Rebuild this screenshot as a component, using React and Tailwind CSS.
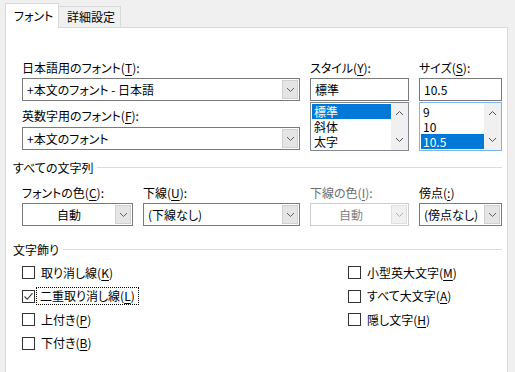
import React from 'react';

const Chevron = ({ up = false, color = '#606060' }) => (
  <svg width="9" height="6" viewBox="0 0 9 6" className="block">
    <path d={up ? 'M1 5 L4.5 1.5 L8 5' : 'M1 1 L4.5 4.5 L8 1'} fill="none" stroke={color} strokeWidth="1" />
  </svg>
);

const U = ({ children }) => <span className="underline underline-offset-2">{children}</span>;

const Combo = ({ value, center = false, disabled = false, className = '' }) => (
  <div className={`flex h-[23px] border bg-white ${disabled ? 'border-[#cccccc] text-[#838383]' : 'border-[#7a7a7a] text-black'} ${className}`}>
    <div className={`flex-1 flex items-center min-w-0 whitespace-nowrap ${center ? 'justify-center' : 'pl-[4px]'}`}>{value}</div>
    <div className={`w-[16px] my-px mr-px flex items-center justify-center border ${disabled ? 'bg-[#f0f0f0] border-[#e0e0e0]' : 'bg-[#e5e5e5] border-[#d0d0d0]'}`}>
      <Chevron color={disabled ? '#b0b0b0' : '#606060'} />
    </div>
  </div>
);

const ListBox = ({ items, selected, border = 'border-[#828790]' }) => (
  <div className={`mt-px flex h-[49px] border bg-white ${border}`}>
    <div className="flex-1 pt-px pl-px">
      {items.map((it) => (
        <div key={it} className={`h-[15px] leading-[15px] pl-[2px] ${it === selected ? 'bg-[#0078d7] text-white' : 'text-black'}`}>
          {it}
        </div>
      ))}
    </div>
    <div className="w-[17px] bg-[#f0f0f0] flex flex-col items-center justify-between py-[7px]">
      <Chevron up color="#505050" />
      <Chevron color="#505050" />
    </div>
  </div>
);

const Section = ({ title, className = '' }) => (
  <div className={`flex items-center h-[15px] ${className}`}>
    <span className="leading-[15px] whitespace-nowrap">{title}</span>
    <div className="flex-1 h-px bg-[#dcdcdc] ml-[4px]" />
  </div>
);

const Check = ({ label, checked = false, focus = false }) => (
  <div className="flex items-center h-[23.5px]">
    <div className="w-[13px] h-[13px] border border-[#333333] bg-white flex items-center justify-center">
      {checked && (
        <svg width="11" height="11" viewBox="0 0 11 11">
          <path d="M1.5 5.5 L4.2 8.3 L9.5 2.2" fill="none" stroke="#333333" strokeWidth="1.1" />
        </svg>
      )}
    </div>
    <span className={`ml-[2px] px-[3px] leading-[16px] whitespace-nowrap ${focus ? 'outline outline-1 outline-dotted outline-black' : 'border border-transparent'}`}>
      {label}
    </span>
  </div>
);

const Label = ({ children, muted = false }) => (
  <div className={`h-[15px] leading-[15px] whitespace-nowrap ${muted ? 'text-[#6d6d6d]' : 'text-black'}`}>{children}</div>
);

export default function App() {
  return (
    <div className="w-[515px] h-[372px] overflow-hidden bg-[#f0f0f0] text-[12px] text-black font-['Noto_Sans_CJK_JP','Noto_Sans',sans-serif] [font-feature-settings:'palt']">
      {/* タブ */}
      <div className="flex items-end h-[27px] pl-[5px]">
        <div className="relative z-10 -mb-px w-[54px] h-[25px] bg-white border-x border-t border-[#d9d9d9] pl-[8px] pt-[4px] leading-[15px]">
          フォント
        </div>
        <div className="w-[62px] h-[21px] border-t border-r border-[#d9d9d9] pl-[8px] pt-[2px] leading-[15px]">
          詳細設定
        </div>
      </div>

      {/* パネル */}
      <div className="ml-[5px] w-[503px] h-[360px] bg-white border border-[#d9d9d9] pl-[7px] pr-[5px]">
        <div className="pl-[9px] pt-[32px] flex items-start gap-[10px]">
          <div className="w-[278px]">
            <Label>日本語用のフォント(<U>T</U>):</Label>
            <Combo value="+本文のフォント - 日本語" className="mt-[3px]" />
            <div className="mt-[7px]">
              <Label>英数字用のフォント(<U>F</U>):</Label>
            </div>
            <Combo value="+本文のフォント" className="mt-[4px]" />
          </div>
          <div className="w-[99px]">
            <Label>スタイル(<U>Y</U>):</Label>
            <div className="mt-[3px] h-[23px] border border-[#7a7a7a] flex items-center pl-[4px]">標準</div>
            <ListBox items={['標準', '斜体', '太字']} selected="標準" />
          </div>
          <div className="w-[83px]">
            <Label>サイズ(<U>S</U>):</Label>
            <div className="mt-[3px] h-[23px] border border-[#7a7a7a] flex items-center pl-[4px]">10.5</div>
            <ListBox items={['9', '10', '10.5']} selected="10.5" border="border-[#7eb4ea]" />
          </div>
        </div>

        <Section title="すべての文字列" className="mt-[9px]" />

        <div className="pl-[9px] mt-[10px] flex items-start gap-[10px]">
          <div className="w-[111px]">
            <Label>フォントの色(<U>C</U>):</Label>
            <Combo value="自動" center className="mt-[3px]" />
          </div>
          <div className="w-[157px]">
            <Label>下線(<U>U</U>):</Label>
            <Combo value="(下線なし)" className="mt-[3px]" />
          </div>
          <div className="w-[99px]">
            <Label muted>下線の色(<U>I</U>):</Label>
            <Combo value="自動" center disabled className="mt-[3px]" />
          </div>
          <div className="w-[83px]">
            <Label>傍点(<U>:</U>)</Label>
            <Combo value="(傍点なし)" className="mt-[3px]" />
          </div>
        </div>

        <Section title="文字飾り" className="mt-[16px]" />

        <div className="pl-[9px] mt-[4px] flex items-start">
          <div className="w-[326px]">
            <Check label={<>取り消し線(<U>K</U>)</>} />
            <Check label={<>二重取り消し線(<U>L</U>)</>} checked focus />
            <Check label={<>上付き(<U>P</U>)</>} />
            <Check label={<>下付き(<U>B</U>)</>} />
          </div>
          <div>
            <Check label={<>小型英大文字(<U>M</U>)</>} />
            <Check label={<>すべて大文字(<U>A</U>)</>} />
            <Check label={<>隠し文字(<U>H</U>)</>} />
          </div>
        </div>

        <Section title="プレビュー" className="mt-[16px]" />
      </div>
    </div>
  );
}
